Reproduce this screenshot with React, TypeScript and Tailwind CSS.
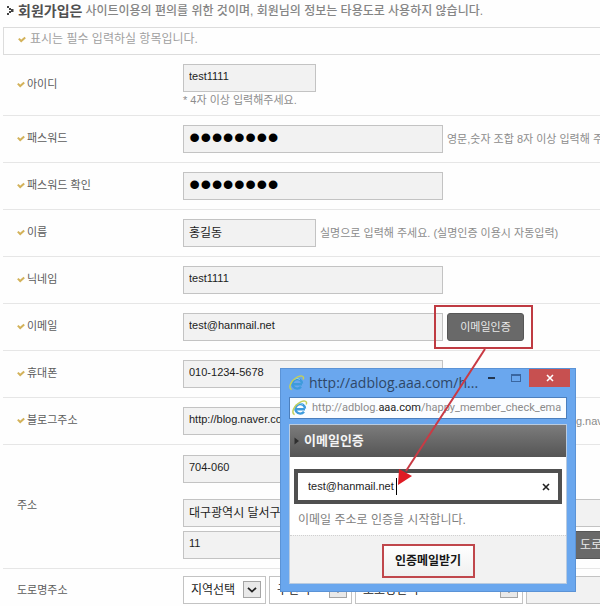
import { useState, type ReactNode } from 'react'

const SANS = `font-['Liberation_Sans','Noto_Sans_CJK_KR',sans-serif]`

export default function App() {
  return (
    <div className={`relative min-h-screen overflow-hidden bg-[#fefefe] pl-[3px] ${SANS}`}>
      <header className="flex items-center h-[27px] pb-1.5 whitespace-nowrap">
        <HeadingMark />
        <h1 className="ml-1 text-sm font-bold text-[#505050]">회원가입은</h1>
        <p className="ml-[3px] text-xs font-medium text-[#858585]">
          사이트이용의 편의를 위한 것이며, 회원님의 정보는 타용도로 사용하지 않습니다.
        </p>
      </header>

      <div className="flex items-center h-7 pl-3.5 pb-1 border border-r-0 border-[#dcdcdc] whitespace-nowrap">
        <CheckMark />
        <p className="ml-1 text-xs text-[#a0a0a0]">표시는 필수 입력하실 항목입니다.</p>
      </div>

      <form onSubmit={(e) => e.preventDefault()}>
        <div className="flex h-[61px] border-b border-[#e6e6e6]">
          <FieldLabel htmlFor="user-id" required>아이디</FieldLabel>
          <div className="flex-1 min-w-0 pt-[9px]">
            <TextField id="user-id" value="test1111" width="w-[133px]" />
            <Hint>* 4자 이상 입력해주세요.</Hint>
          </div>
        </div>

        <Row id="password" label="패스워드">
          <PasswordField id="password" />
          <Hint>영문,숫자 조합 8자 이상 입력해 주세요.</Hint>
        </Row>
        <Row id="password-confirm" label="패스워드 확인">
          <PasswordField id="password-confirm" />
        </Row>
        <Row id="name" label="이름">
          <TextField id="name" value="홍길동" width="w-[133px]" size="text-xs" />
          <Hint>실명으로 입력해 주세요. (실명인증 이용시 자동입력)</Hint>
        </Row>
        <Row id="nickname" label="닉네임">
          <TextField id="nickname" value="test1111" />
        </Row>
        <Row id="email" label="이메일">
          <TextField id="email" value="test@hanmail.net" />
          <div className="relative">
            <button type="button" className="block h-7 w-[77px] rounded-[3px] border border-[#575757] bg-[#696969] text-[11px] text-[#e8e8e8]">
              이메일인증
            </button>
            <span className="absolute -left-[13px] -right-[9px] -top-2 -bottom-2 border-2 border-[#bf3b42] pointer-events-none" />
          </div>
        </Row>
        <Row id="phone" label="휴대폰">
          <TextField id="phone" value="010-1234-5678" />
        </Row>
        <Row id="blog" label="블로그주소">
          <TextField id="blog" value="http://blog.naver.com/test1111" />
          <Hint>블로그 주소 입력 - http://blog.naver.com</Hint>
        </Row>

        <div className="flex border-b border-[#e6e6e6]">
          <FieldLabel htmlFor="address">주소</FieldLabel>
          <div className="flex flex-col flex-1 min-w-0 pt-[10px] pb-[9px]">
            <TextField id="zip" ariaLabel="우편번호" value="704-060" width="w-[133px]" />
            <div className="mt-4">
              <TextField id="address" value="대구광역시 달서구" width="w-[440px]" size="text-xs" />
            </div>
            <div className="flex items-center mt-1">
              <TextField id="address-detail" ariaLabel="상세주소" value="11" width="w-[380px]" />
              <button type="button" className="shrink-0 h-7 ml-1 px-3 border border-[#575757] bg-[#696969] text-xs text-[#e8e8e8] whitespace-nowrap">
                도로명주소
              </button>
            </div>
          </div>
        </div>

        <div className="flex h-11">
          <FieldLabel htmlFor="region">도로명주소</FieldLabel>
          <div className="flex flex-1 gap-[3px] min-w-0 pt-[7px]">
            <SelectField id="region" label="지역선택" width="w-[83px]" />
            <SelectField id="district" label="구선택" width="w-[83px]" />
            <SelectField id="road" label="도로명선택" width="w-[168px]" />
            <TextField id="road-number" ariaLabel="건물번호" value="" width="w-[133px]" />
          </div>
        </div>
      </form>

      <EmailPopup />

      {/* callout from the verify button to the popup input */}
      <svg className="absolute left-[390px] top-[349px] pointer-events-none" width="100" height="140" viewBox="0 0 100 140">
        <path d="M95 0 L16 122" stroke="#c93a44" strokeWidth="2" fill="none" />
        <path d="M8 136 L9 120 L22 127 Z" fill="#e01b24" />
      </svg>
    </div>
  )
}

function EmailPopup() {
  const [email, setEmail] = useState('test@hanmail.net')

  return (
    <section
      aria-label="이메일인증"
      className="absolute left-[280px] top-[368px] w-[296px] px-2 pb-[7px] bg-[#6aa7ee] border border-[#5b93d6] whitespace-nowrap"
    >
      <div className="flex items-center h-7">
        <BrowserIcon size={16} />
        <span className="w-[172px] ml-1 overflow-hidden font-['Open_Sans',sans-serif] text-sm leading-5 text-[#2f4768]">
          http://adblog.aaa.com/h...
        </span>
        <div className="flex self-start ml-auto mr-[-3px]">
          <button type="button" aria-label="최소화" className="flex items-center justify-center w-6 h-[18px]">
            <span className="w-[7px] h-0.5 bg-[#23364f]" />
          </button>
          <button type="button" aria-label="최대화" className="flex items-center justify-center w-[26px] h-[18px]">
            <span className="w-[10px] h-2 border border-t-2 border-[#3a66a0]" />
          </button>
          <button type="button" aria-label="닫기" className="flex items-center justify-center w-[41px] h-[18px] bg-[#c75050]">
            <CloseGlyph color="#ffffff" />
          </button>
        </div>
      </div>

      <div className="flex items-center h-[22px] pl-[2px] overflow-hidden bg-[#fbfdff] border border-[#4c7fbd] font-[Roboto,sans-serif] text-[11px] text-[#8b8b8b]">
        <BrowserIcon size={16} />
        <span className="ml-1">
          http://adblog.<span className="text-[#222222]">aaa.com</span>/happy_member_check_ema
        </span>
      </div>

      <div className="mt-[5px] bg-white border border-[#b9cbe0]">
        <div className="flex items-center h-8 pl-1 bg-linear-to-b from-[#7c7c7c] to-[#555555]">
          <svg width="6" height="8" viewBox="0 0 6 8">
            <path d="M0.5 0.5 L5 4 L0.5 7.5 Z" fill="#2e2e2e" />
          </svg>
          <h2 className="ml-1 text-[13px] font-bold text-[#f4f4f4]">이메일인증</h2>
        </div>

        <div className="pt-3 px-1 pb-[5px]">
          <div className="flex items-center h-[35px] border-4 border-[#505050] bg-white">
            <input
              aria-label="이메일"
              value={email}
              onChange={(e) => setEmail(e.target.value)}
              className="w-[89px] ml-[10px] text-[11px] text-[#222222] border-r border-black outline-none"
            />
            <button type="button" aria-label="지우기" onClick={() => setEmail('')} className="ml-auto mr-2">
              <CloseGlyph color="#222222" />
            </button>
          </div>
          <p className="mt-1.5 pl-1 text-xs leading-5 text-[#808080]">이메일 주소로 인증을 시작합니다.</p>
        </div>

        <div className="flex justify-center h-12 pt-2 bg-[#f2f2f2] border-t border-dotted border-[#d0d0d0]">
          <button type="button" className="w-[93px] h-[34px] border-2 border-[#c0474c] bg-linear-to-b from-white to-[#f0f0f0] text-xs font-bold text-[#161616]">
            인증메일받기
          </button>
        </div>
      </div>
    </section>
  )
}

function Row({ id, label, children }: { id: string; label: string; children: ReactNode }) {
  return (
    <div className="flex h-[47px] border-b border-[#e6e6e6]">
      <FieldLabel htmlFor={id} required>{label}</FieldLabel>
      <div className="flex items-center flex-1 gap-1 min-w-0">{children}</div>
    </div>
  )
}

function FieldLabel({ htmlFor, required, children }: { htmlFor: string; required?: boolean; children: ReactNode }) {
  return (
    <label htmlFor={htmlFor} className="flex items-center shrink-0 gap-0.5 w-[180px] pl-3.5 pb-0.5 text-[11px] text-[#5c5c5c]">
      {required && <CheckMark />}
      {children}
    </label>
  )
}

function TextField({
  id,
  value,
  ariaLabel,
  width = 'w-[260px]',
  size = 'text-[11px]',
}: {
  id: string
  value: string
  ariaLabel?: string
  width?: string
  size?: string
}) {
  return (
    <input
      id={id}
      aria-label={ariaLabel}
      defaultValue={value}
      className={`block shrink-0 h-7 pl-[5px] pb-1 bg-[#f2f2f2] border border-[#c3c3c3] text-[#1c1c1c] outline-none ${width} ${size}`}
    />
  )
}

function PasswordField({ id }: { id: string }) {
  return (
    <input
      id={id}
      type="password"
      defaultValue="test1111"
      className="block shrink-0 w-[260px] h-7 pl-[5px] pb-1 bg-[#f2f2f2] border border-[#c3c3c3] text-[32px] text-black outline-none"
    />
  )
}

function SelectField({ id, label, width }: { id: string; label: string; width: string }) {
  return (
    <div className={`relative shrink-0 h-7 ${width}`}>
      <select
        id={id}
        aria-label={label}
        className="w-full h-7 pl-[7px] appearance-none bg-white border border-[#c3c3c3] text-xs text-[#1c1c1c] outline-none"
      >
        <option>{label}</option>
      </select>
      <span className="absolute right-[5px] top-[5px] flex items-center justify-center w-[18px] h-[17px] bg-[#e9e9e9] border border-[#a5a5a5] pointer-events-none">
        <svg width="10" height="6" viewBox="0 0 10 6">
          <path d="M1 0.8 L5 4.6 L9 0.8" stroke="#222222" strokeWidth="1.8" fill="none" />
        </svg>
      </span>
    </div>
  )
}

function Hint({ children }: { children: ReactNode }) {
  return <p className="text-[11px] leading-4 text-[#8c8c8c] whitespace-nowrap">{children}</p>
}

function CheckMark() {
  return (
    <svg className="shrink-0" width="8" height="7" viewBox="0 0 8 7">
      <path d="M0.8 2.6 L3.2 5 L7.2 1.4" stroke="#d3b25a" strokeWidth="2" fill="none" />
    </svg>
  )
}

function HeadingMark() {
  return (
    <svg className="shrink-0 ml-1" width="7" height="9" viewBox="0 0 7 9">
      <path d="M0 0h2v2h-2z M2 2h2v2h-2z M4 3h2.5v3h-2.5z M2 5h2v2h-2z M0 7h2v2h-2z" fill="#454545" />
    </svg>
  )
}

function CloseGlyph({ color }: { color: string }) {
  return (
    <svg width="8" height="8" viewBox="0 0 8 8">
      <path d="M1 1 L7 7 M7 1 L1 7" stroke={color} strokeWidth="1.6" />
    </svg>
  )
}

function BrowserIcon({ size }: { size: number }) {
  return (
    <svg className="shrink-0" width={size} height={size} viewBox="0 0 16 16" fill="none">
      <path d="M13 9.2 H4.2 M13 8.6 A4.8 4.8 0 1 0 12 11.8" stroke="#3e9bdc" strokeWidth="2.4" />
      <path d="M5 4.6 A4.6 4.6 0 0 1 11 4.4" stroke="#8fd0f4" strokeWidth="1" />
      <path d="M2.6 14.6 C-1.4 12.6 2.4 5.4 7.4 2.6 C11.4 0.2 15.8 0.4 14.2 4.6" stroke="#c3cf5c" strokeWidth="1.5" />
    </svg>
  )
}
